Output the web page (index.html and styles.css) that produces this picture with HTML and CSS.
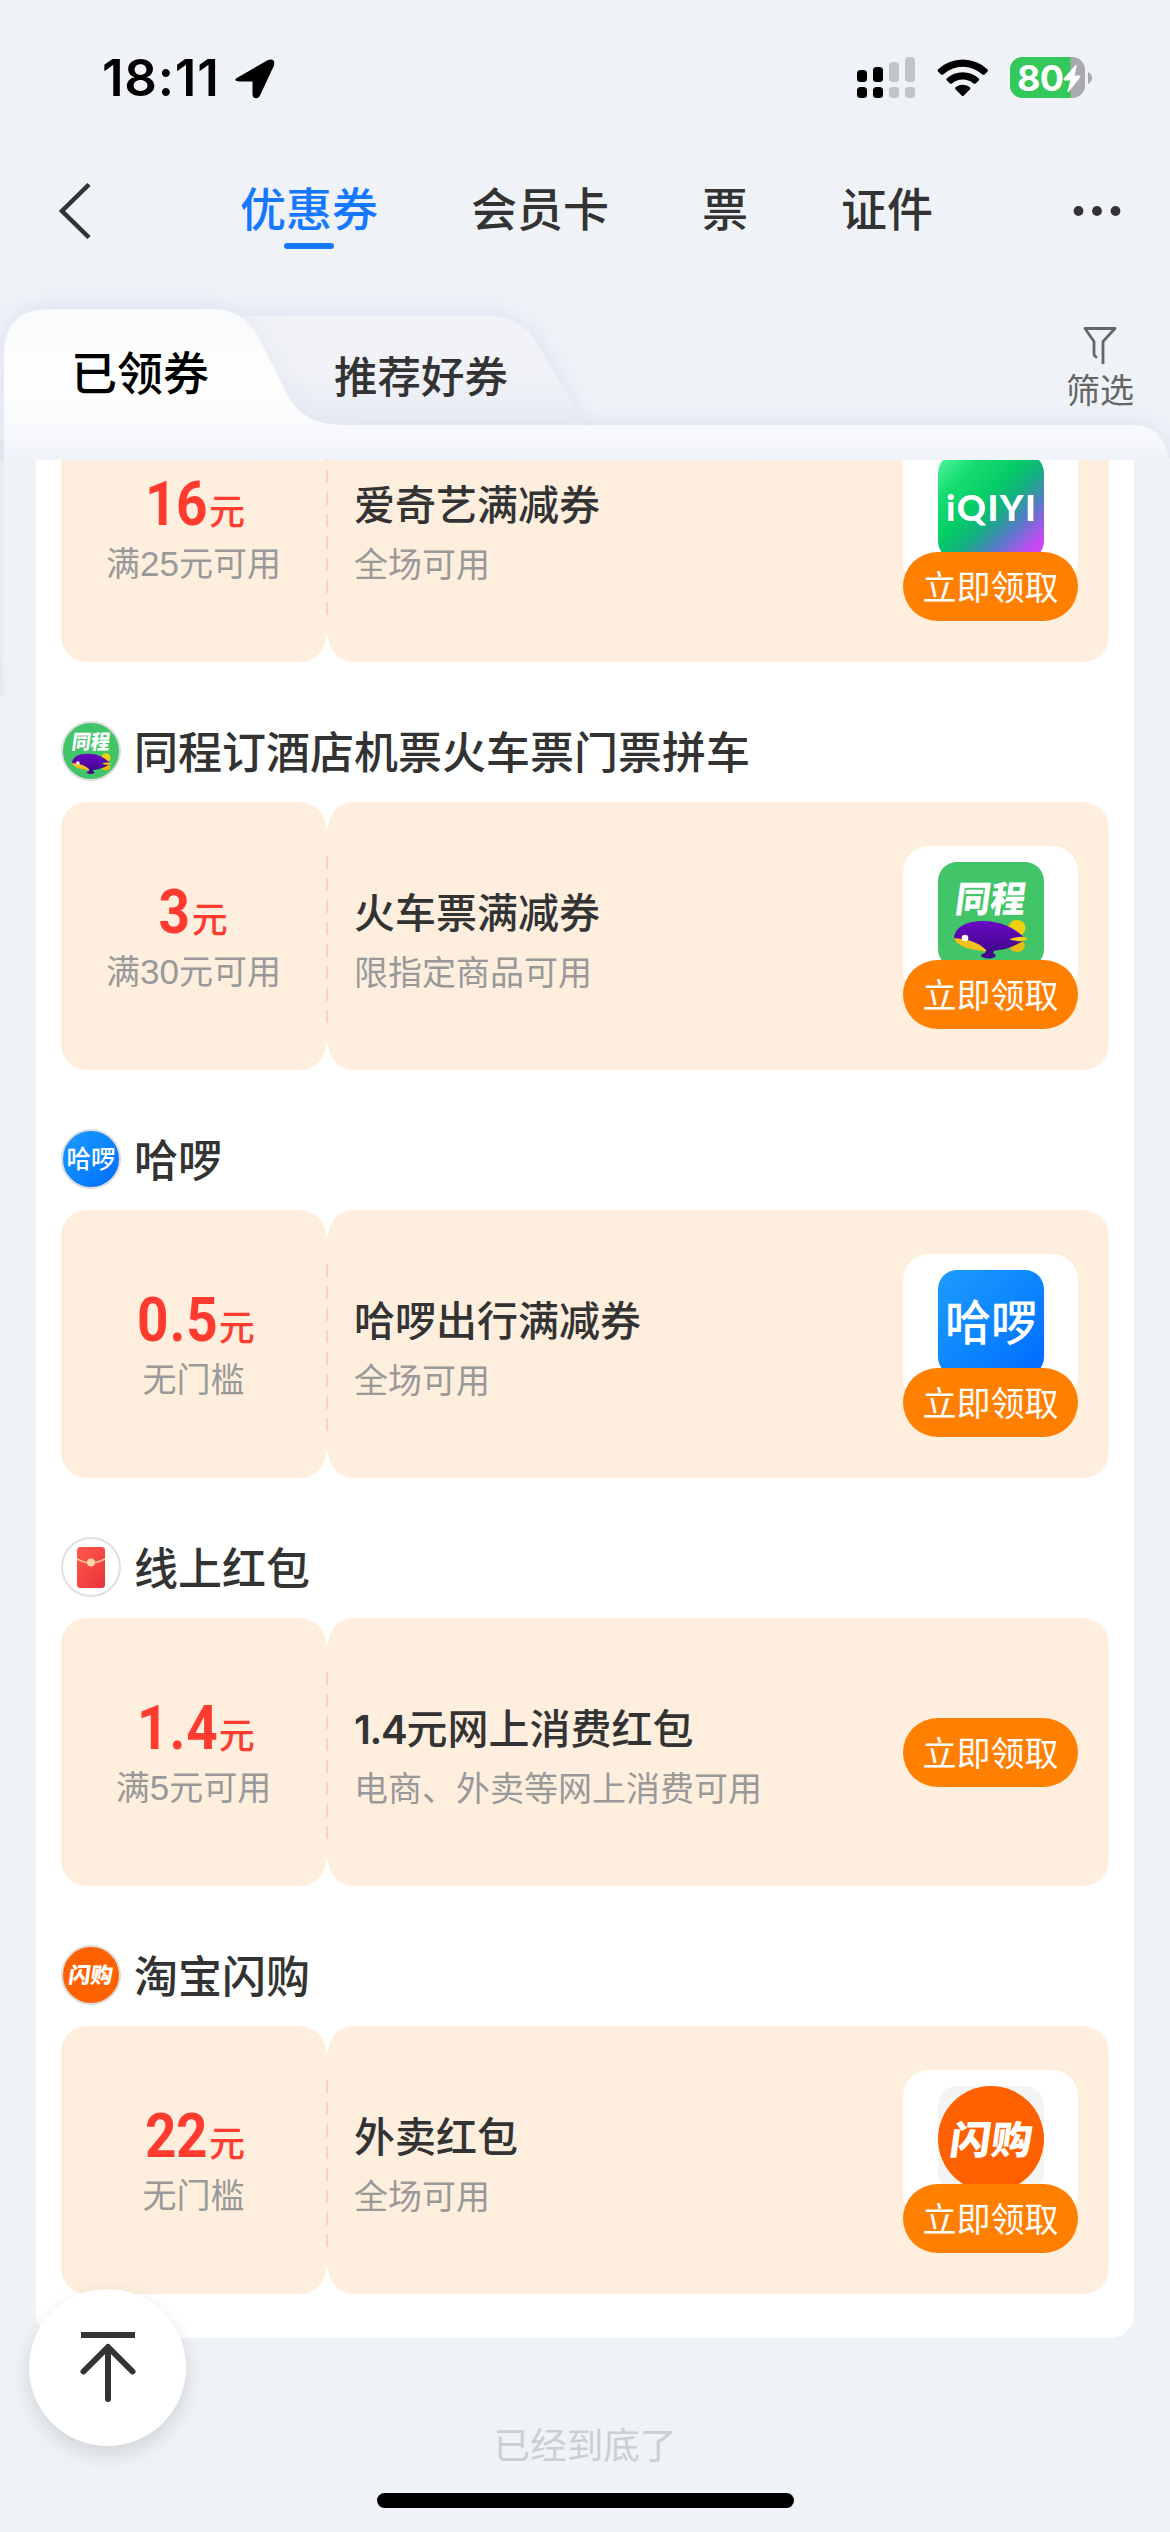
FILE: index.html
```html
<!DOCTYPE html>
<html lang="zh-CN">
<head>
<meta charset="utf-8">
<title>优惠券</title>
<link rel="stylesheet" href="styles.css">
</head>
<body>
<div class="screen">
  <div class="status">
    <div class="status-left">
      <span class="time">18:11</span>
      <svg class="loc" width="40" height="40" viewBox="0 0 40 40"><path d="M3.500 18 33 1Q40.500-1.500 39 6.500L25 36.500C23 41 17.500 39.500 17.500 35.500V22.500H5C-1 22.500-1 20 3.500 18Z"/></svg>
    </div>
    <div class="status-right">
      <svg width="59" height="42" viewBox="0 0 59 42">
        <g fill="#000"><rect y="13" width="10" height="12" rx="3.500"/><rect x="16" y="10" width="10" height="15" rx="3.500"/><rect y="30" width="10" height="11" rx="3.500"/><rect x="16" y="30" width="10" height="11" rx="3.500"/></g>
        <g fill="#c2c4c9"><rect x="32" y="5" width="10" height="20" rx="3.500"/><rect x="48" width="10" height="25" rx="3.500"/><rect x="32" y="30" width="10" height="11" rx="3.500"/><rect x="48" y="30" width="10" height="11" rx="3.500"/></g>
      </svg>
      <svg class="wifi" width="52" height="38" viewBox="0 0 52 38"><path d="M1.200 12.800Q0 11.500 1.200 10.200A36 36 0 0 1 50.300 10.200Q51.500 11.500 50.300 12.800L47.500 15.400Q46.300 16.200 45 15.200A28.500 28.500 0 0 0 6.500 15.200Q5.200 16.200 4 15.400Z"/><path d="M9.800 21.600Q8.700 20.400 9.900 19.300A23.500 23.500 0 0 1 41.600 19.300Q42.800 20.400 41.700 21.600L38.600 24.400Q37.500 25.300 36.200 24.300A16.500 16.500 0 0 0 15.300 24.300Q14 25.300 12.900 24.400Z"/><path d="M18.500 30.200Q17.500 29 18.800 28A12.500 12.500 0 0 1 32.700 28Q34 29 33 30.200L26.900 36.600Q25.700 37.600 24.600 36.600Z"/></svg>
      <div class="battery">
        <svg width="83" height="42" viewBox="0 0 83 42">
          <defs><clipPath id="bat"><rect width="75" height="41" rx="12.500"/></clipPath></defs>
          <g clip-path="url(#bat)"><rect width="75" height="41" fill="#a9aaae"/><rect width="60.500" height="41" fill="#34c759"/></g>
          <path d="M78 15Q82 17 82 21T78 27Z" fill="#a9aaae"/>
          <path d="M65 8.500Q67 7 66.500 10L64.500 18.500H69Q71.500 18.800 70 20.500L59 34.500Q57 36 57.500 33.500L60.500 23.500H55Q52.500 23.200 54 21.200Z" fill="#fff"/>
        </svg>
        <span class="bat-num">80</span>
      </div>
    </div>
  </div>

  <nav class="nav">
    <svg class="back" width="34" height="56" viewBox="0 0 34 56"><path d="M31 1.500 4 28 31 54.500" fill="none" stroke="#333" stroke-width="4.500"/></svg>
    <div class="nav-tabs">
      <span class="nav-tab active">优惠券</span>
      <span class="nav-tab">会员卡</span>
      <span class="nav-tab">票</span>
      <span class="nav-tab">证件</span>
    </div>
    <svg class="more" width="50" height="12" viewBox="0 0 50 12" fill="#333"><circle cx="6.500" cy="6" r="4.900"/><circle cx="25" cy="6" r="4.900"/><circle cx="43.500" cy="6" r="4.900"/></svg>
  </nav>

  <header class="tabs">
    <svg class="tabs-shape" width="1170" height="440" viewBox="0 260 1170 440">
      <defs>
        <linearGradient id="g1" gradientUnits="userSpaceOnUse" x1="0" y1="309" x2="0" y2="460"><stop offset="0" stop-color="#f9fafc"/><stop offset=".5" stop-color="#fefefe"/><stop offset=".75" stop-color="#fafbfd"/><stop offset="1" stop-color="#f0f3f9"/></linearGradient>
        <linearGradient id="g2" gradientUnits="userSpaceOnUse" x1="0" y1="316" x2="0" y2="425"><stop offset="0" stop-color="#f1f3f7"/><stop offset=".5" stop-color="#f0f2f7"/><stop offset="1" stop-color="#e8ecf3"/></linearGradient>
        <linearGradient id="g3" x1="0" y1="0" x2="0" y2="1"><stop offset="0" stop-color="#e8ecf3"/><stop offset="1" stop-color="#e6eaf0"/></linearGradient>
        <filter id="blur" filterUnits="userSpaceOnUse" x="-60" y="240" width="1300" height="300"><feGaussianBlur stdDeviation="13"/></filter>
        <clipPath id="top"><rect y="260" width="1170" height="200"/></clipPath>
        <clipPath id="t2"><path d="M225 425V316H490C515 316 532 330 541 350L585 425Z"/></clipPath>
      </defs>
      <rect x="0" y="440" width="3.500" height="257" fill="url(#g3)"/>
      <g clip-path="url(#top)">
        <g filter="url(#blur)" fill="#d4dbeb" opacity=".85">
          <path d="M4 520V350Q4 309 45 309H213C240 309 254 325 265 350L290 425H1133C1155 425 1166 440 1170 460V520Z"/>
          <path d="M225 425V316H490C515 316 532 330 541 350L583 425Z"/>
        </g>
        <path d="M225 425V316H490C515 316 532 330 541 350L585 425Z" fill="url(#g2)"/>
        <g clip-path="url(#t2)"><path filter="url(#blur)" d="M4 480V309H213C240 309 254 325 265 350L287 395C298 415 315 425 345 425H600V480Z" fill="#d8deec" opacity=".5"/></g>
        <path d="M4 460V350Q6 309 50 309H213C240 309 254 325 265 350L287 394C298 415 315 425 345 425H1133C1155 425 1166 440 1170 460Z" fill="url(#g1)"/>
      </g>
    </svg>
    <span class="tab tab-on">已领券</span>
    <span class="tab">推荐好券</span>
    <div class="filter">
      <svg width="36" height="40" viewBox="0 0 36 40"><path d="M15 32.500Q12 31 12 29V16.500L3 3.500H33L21 16.500V39" fill="none" stroke="#666" stroke-width="2.800" stroke-linejoin="round"/></svg>
      <span>筛选</span>
    </div>
  </header>

  <main class="viewport">
    <div class="sheet">
      <section class="group first">
        <div class="card">
          <div class="amount"><p class="price"><b>16</b><i>元</i></p><p class="rule">满<span>25</span>元可用</p></div>
          <div class="perf"></div>
          <div class="info">
            <div><h3>爱奇艺满减券</h3><p>全场可用</p></div>
            <div class="act"><div class="pic">
              <svg width="106" height="106" viewBox="0 0 106 106"><defs><linearGradient id="iq" x1="0" y1="0" x2="1" y2="1"><stop offset="0" stop-color="#58f8a4"/><stop offset=".22" stop-color="#16dc70"/><stop offset=".42" stop-color="#06cc68"/><stop offset=".56" stop-color="#13b080"/><stop offset=".72" stop-color="#5a78ca"/><stop offset=".88" stop-color="#c24cf0"/><stop offset="1" stop-color="#d044f5"/></linearGradient></defs><rect width="106" height="106" rx="19" fill="url(#iq)"/><text class="iqiyi" x="8" y="67" textLength="90">iQIYI</text></svg>
            </div><span class="btn">立即领取</span></div>
          </div>
        </div>
      </section>

      <section class="group">
        <h2><svg class="ava" width="60" height="60" viewBox="0 0 60 60"><circle cx="30" cy="30" r="29" fill="#42c468" stroke="#ddd" stroke-width="2"/><text class="logo-t" x="10" y="28" font-size="20" textLength="38" lengthAdjust="spacingAndGlyphs" transform="translate(4 0) skewX(-8)">同程</text><g transform="translate(2.300 1) scale(.54)"><use href="#ship"/></g></svg><span>同程订酒店机票火车票门票拼车</span></h2>
        <div class="card">
          <div class="amount"><p class="price"><b>3</b><i>元</i></p><p class="rule">满<span>30</span>元可用</p></div>
          <div class="perf"></div>
          <div class="info">
            <div><h3>火车票满减券</h3><p>限指定商品可用</p></div>
            <div class="act"><div class="pic">
              <svg width="106" height="106" viewBox="0 0 106 106">
                <defs>
                  <linearGradient id="pu" x1="0" y1="0" x2="0" y2="1"><stop offset="0" stop-color="#6a08c4"/><stop offset="1" stop-color="#42068e"/></linearGradient>
                  <g id="ship"><ellipse cx="79" cy="66" rx="8.500" ry="8" fill="#f3d00c"/><ellipse cx="79" cy="84" rx="8" ry="6" fill="#e6bb10"/><path d="M16 76C17 65 28 59 46 59 64 59 80 68 87 77 76 86 62 89 49 89 32 88 17 82 16 76Z" fill="url(#pu)"/><path d="M16 76Q19 87 49 89.500Q41 78 16 76Z" fill="#f1c21b"/><path d="M71 77.500Q84 72.500 90 77Q84 81 71 77.500Z" fill="#f3d00c"/><circle cx="27" cy="76" r="3.300" fill="#fff"/><path d="M48 89H56L55 91Q59 93 57 95 51 98 44 95 41 93 47 91Z" fill="#42068e"/></g>
                </defs>
                <rect width="106" height="106" rx="19" fill="#42c468"/><text class="logo-t" x="16" y="50" font-size="36" textLength="70" lengthAdjust="spacingAndGlyphs" transform="translate(7 0) skewX(-8)">同程</text><use href="#ship"/></svg>
            </div><span class="btn">立即领取</span></div>
          </div>
        </div>
      </section>

      <section class="group">
        <h2><svg class="ava" width="60" height="60" viewBox="0 0 60 60"><defs><linearGradient id="ha" x1="0" y1="0" x2="1" y2="1"><stop offset="0" stop-color="#1e9bff"/><stop offset=".5" stop-color="#0c87fe"/><stop offset="1" stop-color="#0068ff"/></linearGradient></defs><circle cx="30" cy="30" r="29" fill="url(#ha)" stroke="#ddd" stroke-width="2"/><text class="logo-h" x="5.500" y="39" font-size="25" textLength="49" lengthAdjust="spacingAndGlyphs">哈啰</text></svg><span>哈啰</span></h2>
        <div class="card">
          <div class="amount"><p class="price"><b class="dec">0.5</b><i>元</i></p><p class="rule">无门槛</p></div>
          <div class="perf"></div>
          <div class="info">
            <div><h3>哈啰出行满减券</h3><p>全场可用</p></div>
            <div class="act"><div class="pic">
              <svg width="106" height="106" viewBox="0 0 106 106"><rect width="106" height="106" rx="19" fill="url(#ha)"/><text class="logo-h" x="7" y="70" font-size="48" textLength="92" lengthAdjust="spacingAndGlyphs">哈啰</text></svg>
            </div><span class="btn">立即领取</span></div>
          </div>
        </div>
      </section>

      <section class="group">
        <h2><svg class="ava" width="60" height="60" viewBox="0 0 60 60"><defs><linearGradient id="re" x1="0" y1="0" x2="1" y2="1"><stop offset="0" stop-color="#ff5a4a"/><stop offset="1" stop-color="#e9333a"/></linearGradient></defs><circle cx="30" cy="30" r="29" fill="#fff" stroke="#e0e0e0" stroke-width="2"/><rect x="16" y="10" width="28" height="41" rx="3.500" fill="url(#re)"/><path d="M16 22Q24 26 30 26T44 22" fill="none" stroke="#ffc39a" stroke-width="1.800"/><circle cx="30" cy="25.500" r="4" fill="#ffd9a0"/></svg><span>线上红包</span></h2>
        <div class="card">
          <div class="amount"><p class="price"><b class="dec">1.4</b><i>元</i></p><p class="rule">满<span>5</span>元可用</p></div>
          <div class="perf"></div>
          <div class="info">
            <div><h3><span>1.4</span>元网上消费红包</h3><p>电商、外卖等网上消费可用</p></div>
            <div class="act act-solo"><span class="btn">立即领取</span></div>
          </div>
        </div>
      </section>

      <section class="group">
        <h2><svg class="ava" width="60" height="60" viewBox="0 0 60 60"><circle cx="30" cy="30" r="29" fill="#ff6000" stroke="#ddd" stroke-width="2"/><text class="logo-t" x="8" y="38" font-size="22" textLength="44" lengthAdjust="spacingAndGlyphs" transform="translate(4 0) skewX(-8)">闪购</text></svg><span>淘宝闪购</span></h2>
        <div class="card">
          <div class="amount"><p class="price"><b>22</b><i>元</i></p><p class="rule">无门槛</p></div>
          <div class="perf"></div>
          <div class="info">
            <div><h3>外卖红包</h3><p>全场可用</p></div>
            <div class="act"><div class="pic">
              <svg width="106" height="106" viewBox="0 0 106 106"><rect width="106" height="106" rx="19" fill="#f4f4f4"/><circle cx="53" cy="53" r="53" fill="#ff6000"/><text class="logo-t" x="12" y="68" font-size="39" textLength="82" lengthAdjust="spacingAndGlyphs" transform="translate(8 0) skewX(-8)">闪购</text></svg>
            </div><span class="btn">立即领取</span></div>
          </div>
        </div>
      </section>
    </div>
    <p class="end">已经到底了</p>
  </main>

  <div class="to-top"><svg width="60" height="76" viewBox="0 0 60 76" fill="none" stroke="#333" stroke-width="6"><path d="M3 7H57"/><path d="M30 19V71M5.500 43.500 30 19 54.500 43.500" stroke-linecap="round" stroke-linejoin="round"/></svg></div>
  <div class="home"></div>
</div>
</body>
</html>
```
FILE: styles.css
```css
* { box-sizing: border-box; margin: 0; padding: 0; }
body {
  width: 1170px; height: 2532px; overflow: hidden; background: #eff3f8; color: #333;
  font-family: "Noto Sans CJK SC", sans-serif; font-weight: 400;
}
svg { display: block; flex: none; }
.screen { position: relative; width: 1170px; height: 2532px; display: flex; flex-direction: column; overflow: hidden; }

.status { height: 155px; display: flex; justify-content: space-between; align-items: center; padding: 0 77px 0 102px; flex: none; }
.status-left, .status-right { display: flex; align-items: center; }
.time { font: 600 51px/60px Inter, sans-serif; letter-spacing: .8px; color: #000; }
.loc { margin-left: 15px; margin-top: 2px; }
.wifi { margin: 0 21px 0 21px; }
.battery { position: relative; }
.bat-num { position: absolute; left: 7px; top: 0; font: 700 36px/42px Inter, sans-serif; letter-spacing: -.8px; color: #fff; }

.nav { height: 105px; flex: none; display: flex; align-items: center; padding: 0 48px 0 58px; }
.back { margin-top: 6px; }
.nav-tabs { flex: 1; display: flex; gap: 93px; padding-left: 148px; }
.nav-tab { font-size: 46px; line-height: 97px; font-weight: 500; height: 100px; }
.nav-tab.active { color: #1677ff; display: flex; flex-direction: column; align-items: center; }
.nav-tab.active::after { content: ""; width: 50px; height: 6px; border-radius: 3px; background: #1677ff; margin-top: -12px; flex: none; }
.more { margin-top: 6px; }

.tabs { position: relative; height: 200px; flex: none; display: flex; align-items: flex-start; padding: 80px 36px 0 71px; }
.tabs-shape { position: absolute; left: 0; top: 0; }
.tab { position: relative; font-size: 43.5px; line-height: 60px; font-weight: 500; margin: 5px 0 0 125px; }
.tab-on { font-size: 46px; color: #000; margin: 0; }
.filter { position: relative; margin: -15px 0 0 auto; display: flex; flex-direction: column; align-items: center; font-size: 34px; line-height: 48px; color: #666; }

.viewport { flex: 1; overflow: hidden; position: relative; display: flex; flex-direction: column; align-items: center; }
.sheet { width: 1098px; margin-top: -66px; padding: 0 25px 44px; background: #fff; border-radius: 0 0 24px 24px; flex: none; }
.group { height: 408px; padding-top: 59px; }
.group.first { height: 268px; padding-top: 0; }
h2 { height: 60px; display: flex; align-items: center; gap: 13px; font-size: 44px; line-height: 58px; font-weight: 500; margin-bottom: 21px; white-space: nowrap; }
h2 span { padding-bottom: 2px; }
.card { height: 268px; display: flex; }
.amount { width: 265px; background: #feeede; border-radius: 26px; text-align: center; padding-top: 78px; }
.perf {
  width: 2px; margin: 27px 0; padding: 27px 0; background: #feeede;
}
.perf::before { content: ""; display: block; height: 168px; background: repeating-linear-gradient(#fcd0c8 0 13px, transparent 13px 22px); }
.info { flex: 1; background: #feeede; border-radius: 26px; display: flex; justify-content: space-between; padding: 0 31px 0 26px; }
.price { display: flex; justify-content: center; align-items: baseline; height: 65px; line-height: 65px; color: #ff3b30; margin-left: -4px; }
.price b { font: 700 61px/65px Roboto, sans-serif; letter-spacing: -.5px; transform: scaleX(.9); transform-origin: right; }
.price .dec { letter-spacing: 1px; }
.price i { font-style: normal; font-weight: 500; font-size: 36px; margin-left: 2px; }
.price .dec + i { margin-left: 0; }
.rule { font-size: 34px; line-height: 48px; color: #999; margin-top: 1px; }
.rule span { font-family: "Liberation Sans", sans-serif; font-size: 35px; line-height: 1; }
h3 { margin-top: 78px; font-size: 41px; line-height: 60px; font-weight: 500; white-space: nowrap; }
h3 span { font-family: Inter, sans-serif; font-weight: 600; font-size: 40px; letter-spacing: -1.3px; line-height: 1; }
.info p { margin-top: 7px; font-size: 34px; line-height: 48px; color: #999; white-space: nowrap; }
.act { width: 175px; margin-top: 44px; }
.act-solo { margin-top: 100px; }
.pic { height: 150px; background: #fff; border-radius: 26px; padding-top: 16px; display: flex; justify-content: center; margin-bottom: -36px; }
.btn { position: relative; display: block; height: 69px; border-radius: 35px; background: #ff8000; color: #fff; font-size: 34px; line-height: 67px; text-align: center; }
.iqiyi { font: 900 36px Lato, sans-serif; fill: #fff; }
.logo-t { font-weight: 900; fill: #fff; }
.logo-h { font-weight: 500; fill: #fff; }
.end { margin-top: 80px; font-size: 36.600px; line-height: 52px; color: #ccced2; }

.to-top { position: absolute; left: 29px; top: 2289px; width: 157px; height: 157px; border-radius: 50%; background: #fff; display: flex; align-items: center; justify-content: center; box-shadow: 0 8px 20px rgba(0, 0, 0, .13); }
.to-top svg { margin-top: -3px; }
.home { position: absolute; left: 377px; top: 2493px; width: 417px; height: 15px; border-radius: 8px; background: #000; }
```
